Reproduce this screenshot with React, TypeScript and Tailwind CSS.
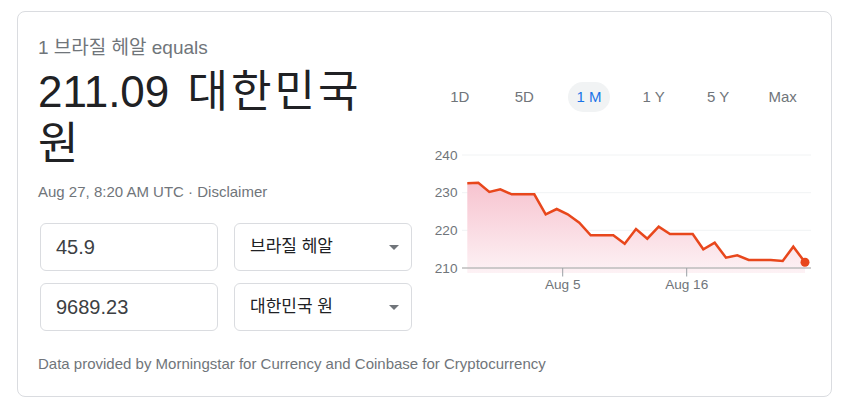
import React from 'react';

const FONT = { fontFamily: '"Liberation Sans", Arial, "Noto Sans CJK KR", sans-serif' };

const points: [number, number][] = [
  [467.3, 183.3], [478.3, 182.7], [489.3, 192], [500.3, 189.3], [511.7, 194.3],
  [534.3, 194.3], [545.7, 214.3], [556.7, 209], [567.7, 214.3], [579.3, 222.7],
  [590.7, 235.3], [613.3, 235.3], [624.7, 243.7], [636, 229], [647.3, 238.7],
  [658.7, 226.7], [670, 234], [692.7, 234], [703.3, 249.3], [714.7, 242.7],
  [726, 257.7], [737.3, 255.3], [748.7, 260], [770.7, 260], [782.7, 261],
  [793.3, 246.7], [805, 262.3],
];

const ranges = ['1D', '5D', '1 M', '1 Y', '5 Y', 'Max'];

const Chart = () => {
  const line = points.map(([x, y]) => `${x},${y}`).join(' ');
  const area = `M467.3,273 L${points.map(([x, y]) => `${x},${y}`).join(' L')} L805,273 Z`;
  const grid = [
    { v: '240', y: 155 },
    { v: '230', y: 192.7 },
    { v: '220', y: 230.3 },
  ];
  return (
    <svg width="390" height="150" viewBox="425 145 390 150" className="block">
      <defs>
        <linearGradient id="fill" x1="0" y1="0" x2="0" y2="1">
          <stop offset="0%" stopColor="#f7c3cf" />
          <stop offset="100%" stopColor="#fdf2f5" />
        </linearGradient>
      </defs>
      {grid.map((g) => (
        <g key={g.v}>
          <line x1="462" x2="811" y1={g.y} y2={g.y} stroke="#f1f3f4" strokeWidth="1" />
          <text x="457.5" y={g.y + 4.5} textAnchor="end" fontSize="13.6" fill="#70757a" style={FONT}>
            {g.v}
          </text>
        </g>
      ))}
      <path d={area} fill="url(#fill)" />
      <line x1="462" x2="811" y1="268" y2="268" stroke="#bdbdbd" strokeWidth="1.5" />
      <text x="457.5" y="272.5" textAnchor="end" fontSize="13.6" fill="#70757a" style={FONT}>210</text>
      <line x1="562.7" x2="562.7" y1="268" y2="276.5" stroke="#9aa0a6" strokeWidth="1" />
      <line x1="686.7" x2="686.7" y1="268" y2="276.5" stroke="#9aa0a6" strokeWidth="1" />
      <text x="562.7" y="289" textAnchor="middle" fontSize="13.6" fill="#70757a" style={FONT}>Aug 5</text>
      <text x="686.7" y="289" textAnchor="middle" fontSize="13.6" fill="#70757a" style={FONT}>Aug 16</text>
      <polyline points={line} fill="none" stroke="#e8471c" strokeWidth="2.5" strokeLinejoin="miter" />
      <circle cx="805" cy="262.3" r="4.5" fill="#e8471c" />
    </svg>
  );
};

const Caret = () => (
  <svg width="10" height="5" viewBox="0 0 10 5" className="block">
    <path d="M0 0h10L5 5z" fill="#70757a" />
  </svg>
);

export default function App() {
  return (
    <div className="w-[842px] h-[409px] bg-white pt-[11px] pl-[17px]" style={FONT}>
      <div className="w-[815px] h-[386px] border border-[#dadce0] rounded-lg flex">
        <div className="w-[407px] pl-[20px] pt-[22px] flex flex-col">
          <div className="text-[19px] leading-[28px] text-[#70757a]">1 브라질 헤알 equals</div>
          <div className="w-[350px] text-[44px] leading-[52px] text-[#202124] mt-[4px] [word-spacing:6px]">
            211.09 <span className="tracking-[3px]">대한민국 원</span>
          </div>
          <div className="text-[15px] leading-[20px] text-[#70757a] mt-[12px]">Aug 27, 8:20 AM UTC · Disclaimer</div>
          <div className="mt-[21px] grid grid-cols-[178px_178px] gap-x-[16px] gap-y-[12px] ml-[2px]">
            {[
              ['45.9', '브라질 헤알'],
              ['9689.23', '대한민국 원'],
            ].map(([v, c]) => (
              <React.Fragment key={v}>
                <div className="h-[48px] border border-[#dadce0] rounded-md flex items-center pl-[15px] text-[20px] text-[#3c4043]">
                  {v}
                </div>
                <div className="h-[48px] border border-[#dadce0] rounded-md flex items-center justify-between pl-[15px] pr-[12px] text-[17px] text-[#202124]">
                  <span>{c}</span>
                  <Caret />
                </div>
              </React.Fragment>
            ))}
          </div>
          <div className="mt-[23px] text-[15px] leading-[20px] text-[#70757a] whitespace-nowrap">
            Data provided by Morningstar for Currency and Coinbase for Cryptocurrency
          </div>
        </div>
        <div className="flex flex-col pt-[70px]">
          <div className="flex items-center h-[30px] w-[390px] text-[15px] pl-[2.5px]">
            {ranges.map((r) => (
              <div
                key={r}
                className={
                  r === '1 M'
                    ? 'w-[42px] h-[30px] rounded-full bg-[#f1f3f4] text-[#1a73e8] flex items-center justify-center mx-[11.5px]'
                    : 'w-[42px] h-[30px] text-[#70757a] flex items-center justify-center mx-[11.5px]'
                }
              >
                {r}
              </div>
            ))}
          </div>
          <div className="mt-[33px]">
            <Chart />
          </div>
        </div>
      </div>
    </div>
  );
}
